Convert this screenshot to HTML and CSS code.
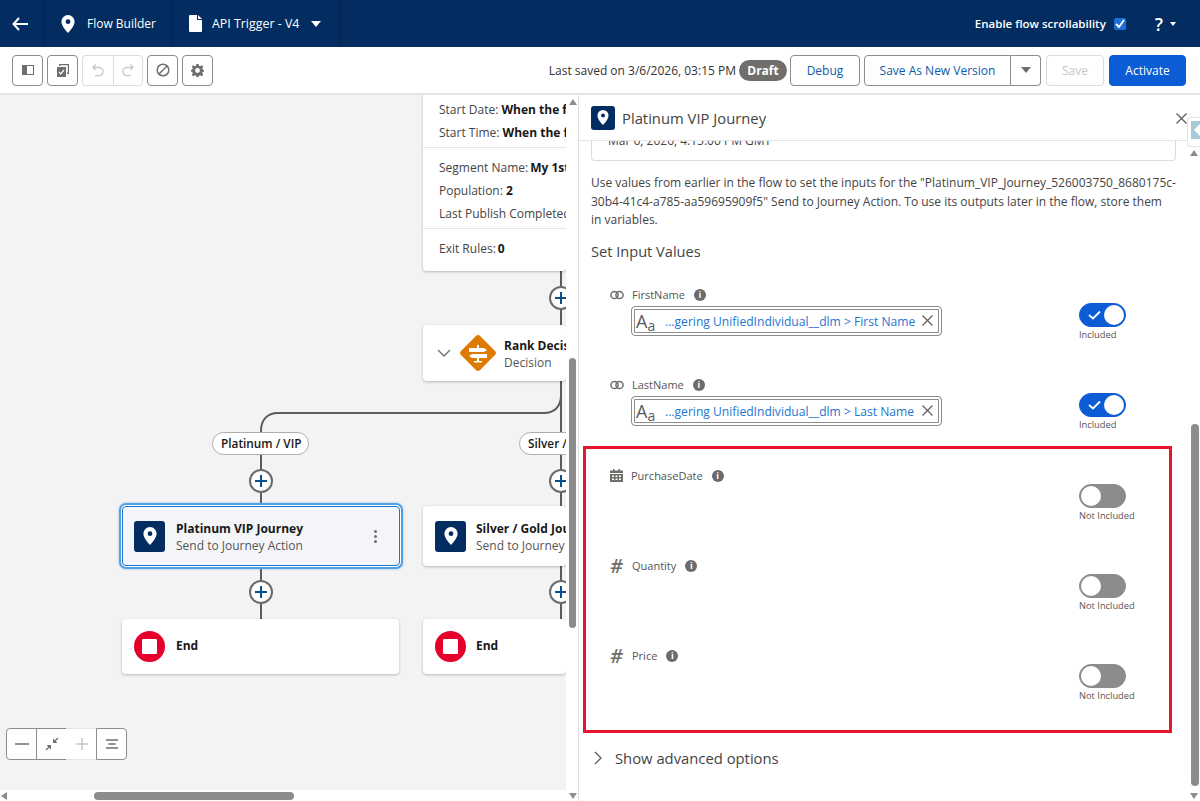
FILE: index.html
```html
<!DOCTYPE html>
<html lang="en">
<head>
    <meta charset="UTF-8">
    <title>Flow Builder - API Trigger - V4</title>
    <link rel="stylesheet" href="styles.css">
</head>
<body>
    <!-- Top bar -->
    <header class="topbar">
        <div class="top-cell back-cell">
            <svg width="16" height="14" viewBox="0 0 16 14"><path d="M7 1 1.500 7 7 13M1.500 7H16" fill="none" stroke="#fff" stroke-width="2"/></svg>
        </div>
        <div class="top-cell app-cell">
            <svg width="14" height="18" viewBox="0 0 14 18"><path fill-rule="evenodd" d="M7 0a6.600 6.600 0 0 1 6.600 6.600C13.600 11 9 16 7 18 5 16 .4 11 .4 6.600A6.600 6.600 0 0 1 7 0zm0 4.300a2.400 2.400 0 1 0 0 4.800 2.400 2.400 0 0 0 0-4.800z" fill="#fff"/></svg>
            <span>Flow Builder</span>
        </div>
        <div class="top-cell file-cell">
            <svg width="13" height="17" viewBox="0 0 13 17"><path d="M1 0h7v5h5v11a1 1 0 0 1-1 1H1a1 1 0 0 1-1-1V1a1 1 0 0 1 1-1zM9 0l4 4H9z" fill="#fff"/></svg>
            <span>API Trigger - V4</span>
            <i class="caret"></i>
        </div>
        <div class="top-right">
            <span class="scroll-label">Enable flow scrollability</span>
            <span class="top-check">
                <svg width="10" height="9" viewBox="0 0 10 9"><path d="M1 5l3 3 5-7" fill="none" stroke="#fff" stroke-width="1.800"/></svg>
            </span>
            <span class="help">?</span>
            <i class="caret small"></i>
        </div>
    </header>

    <!-- Toolbar -->
    <div class="toolbar">
        <div class="tool-left">
            <button class="icon-btn">
                <svg width="12" height="10" viewBox="0 0 12 10"><path fill-rule="evenodd" d="M0 0h12v10H0zM5 1v8h6V1z" fill="#706e6b"/></svg>
            </button>
            <button class="icon-btn">
                <svg width="13" height="13" viewBox="0 0 13 13"><path d="M3 2V0h10v10h-2V8.500h.8V1.200H4.200V2zM1 3h9v10H1z" fill="#706e6b"/><path d="M3 8l1.800 1.800L8 6" fill="none" stroke="#fff" stroke-width="1.200"/></svg>
            </button>
            <div class="btn-pair">
                <button class="icon-btn off">
                    <svg width="14" height="14" viewBox="0 0 14 14"><path d="M4.500 1.500 2 4.500l2.500 2.500M2 4.500h6a4 4 0 0 1 0 8.200H4" fill="none" stroke="#c9c7c5" stroke-width="1.300"/></svg>
                </button>
                <button class="icon-btn off">
                    <svg width="14" height="14" viewBox="0 0 14 14"><path d="M9.500 1.500 12 4.500 9.500 7M12 4.500H6a4 4 0 0 0 0 8.200h4" fill="none" stroke="#c9c7c5" stroke-width="1.300"/></svg>
                </button>
            </div>
            <button class="icon-btn">
                <svg width="14" height="14" viewBox="0 0 14 14"><circle cx="7" cy="7" r="5.800" fill="none" stroke="#706e6b" stroke-width="1.500"/><path d="M3 11l8-8" stroke="#706e6b" stroke-width="1.500"/></svg>
            </button>
            <button class="icon-btn">
                <svg width="13" height="13" viewBox="0 0 24 24"><path fill-rule="evenodd" d="M10 0h4l.7 3.400 2.200.9L20 2.400 22.600 5l-1.900 3 .9 2.200L24 11v3l-2.400.7-.9 2.200 1.900 3L20 22.500l-3-1.900-2.300.9L14 24h-4l-.7-2.500-2.300-.9-3 1.900L1.400 20l1.900-3-.9-2.300L0 14v-3l2.400-.8.900-2.200-1.900-3L4 2.400l3.100 1.900 2.200-.9zM12 7.500a4.500 4.500 0 1 0 0 9 4.500 4.500 0 0 0 0-9z" fill="#706e6b"/></svg>
            </button>
        </div>
        <div class="tool-right">
            <span class="saved">Last saved on 3/6/2026, 03:15 PM</span>
            <span class="draft">Draft</span>
            <button class="btn debug-btn">Debug</button>
            <div class="split">
                <button class="btn split-main">Save As New Version</button>
                <button class="btn split-arrow"><i class="caret grey"></i></button>
            </div>
            <button class="btn save-btn">Save</button>
            <button class="btn activate-btn">Activate</button>
        </div>
    </div>

    <main class="workspace">
        <!-- Flow canvas -->
        <section class="canvas">
            <svg class="wires" width="566" height="706" viewBox="0 0 566 706">
                <path d="M561 176v354M261 530V336c0-11 6-18 17-18h266c10 0 17-6 17-18" fill="none" stroke="#5c5c5c" stroke-width="2"/>
            </svg>

            <div class="node start-node">
                <div class="start-group">
                    <p>Start Date: <b>When the flow starts</b></p>
                    <p>Start Time: <b>When the flow starts</b></p>
                </div>
                <div class="start-group">
                    <p>Segment Name:<b class="tight">My 1st Segment</b></p>
                    <p>Population: <b>2</b></p>
                    <p>Last Publish Completed</p>
                </div>
                <div class="start-group last">
                    <p>Exit Rules:<b class="tight">0</b></p>
                </div>
            </div>

            <div class="add-btn add-a"></div>

            <div class="node flow-node decision-node">
                <svg class="chev" width="14" height="9" viewBox="0 0 14 9"><path d="M1 1l6 6 6-6" fill="none" stroke="#706e6b" stroke-width="1.300"/></svg>
                <svg class="diamond" width="38" height="38" viewBox="0 0 38 38"><rect x="5.500" y="5.500" width="27" height="27" rx="3" transform="rotate(45 19 19)" fill="#dd7a01"/><path d="M10 14h15l3 2-3 2H10zM28 20H13l-3 2 3 2h15zM18 11h2v3h-2zM18 24h2v3h-2zM15 27h8v1.500h-8z" fill="#fff"/></svg>
                <div class="node-text">
                    <strong>Rank Decision</strong>
                    <span>Decision</span>
                </div>
            </div>

            <div class="pill pill-a">Platinum / VIP</div>
            <div class="pill pill-b">Silver / Gold</div>

            <div class="add-btn add-b"></div>
            <div class="add-btn add-c"></div>

            <div class="node flow-node journey-node selected">
                <div class="journey-icon">
                    <svg width="14" height="18" viewBox="0 0 14 18"><path fill-rule="evenodd" d="M7 0a6.600 6.600 0 0 1 6.600 6.600C13.600 11 9 16 7 18 5 16 .4 11 .4 6.600A6.600 6.600 0 0 1 7 0zm0 4.300a2.400 2.400 0 1 0 0 4.800 2.400 2.400 0 0 0 0-4.800z" fill="#fff"/></svg>
                </div>
                <div class="node-text">
                    <strong>Platinum VIP Journey</strong>
                    <span>Send to Journey Action</span>
                </div>
                <div class="dots"><i></i><i></i><i></i></div>
            </div>

            <div class="node flow-node journey-node second">
                <div class="journey-icon">
                    <svg width="14" height="18" viewBox="0 0 14 18"><path fill-rule="evenodd" d="M7 0a6.600 6.600 0 0 1 6.600 6.600C13.600 11 9 16 7 18 5 16 .4 11 .4 6.600A6.600 6.600 0 0 1 7 0zm0 4.300a2.400 2.400 0 1 0 0 4.800 2.400 2.400 0 0 0 0-4.800z" fill="#fff"/></svg>
                </div>
                <div class="node-text">
                    <strong>Silver / Gold Journey</strong>
                    <span>Send to Journey Action</span>
                </div>
            </div>

            <div class="add-btn add-d"></div>
            <div class="add-btn add-e"></div>

            <div class="node flow-node end-node end-a">
                <div class="end-icon"><i></i></div>
                <strong>End</strong>
            </div>
            <div class="node flow-node end-node end-b">
                <div class="end-icon"><i></i></div>
                <strong>End</strong>
            </div>

            <div class="zoom-tools">
                <button class="zoom-btn"><svg width="14" height="2" viewBox="0 0 14 2"><path d="M0 1h14" stroke="#706e6b" stroke-width="1.500"/></svg></button>
                <button class="zoom-btn"><svg width="14" height="14" viewBox="0 0 14 14"><path d="M13 1 9 5M1 13l4-4" stroke="#706e6b" stroke-width="1.300"/><path d="M8 1.500V6h4.500zM6 12.500V8H1.500z" fill="#706e6b"/></svg></button>
                <button class="zoom-btn off"><svg width="12" height="12" viewBox="0 0 12 12"><path d="M6 0v12M0 6h12" stroke="#c9c7c5" stroke-width="1.500"/></svg></button>
                <button class="zoom-btn"><svg width="12" height="10" viewBox="0 0 12 10"><path d="M0 1h12M2.500 5h7M0 9h12" stroke="#706e6b" stroke-width="1.500"/></svg></button>
            </div>

            <div class="v-scroll"><i class="arrow-up"></i><div class="v-thumb"></div><i class="arrow-down"></i></div>
            <div class="h-scroll"><i class="arrow-left"></i><div class="h-thumb"></div></div>
        </section>

        <!-- Properties panel -->
        <aside class="panel">
            <div class="panel-head">
                <div class="journey-icon small">
                    <svg width="12" height="15" viewBox="0 0 14 18"><path fill-rule="evenodd" d="M7 0a6.600 6.600 0 0 1 6.600 6.600C13.600 11 9 16 7 18 5 16 .4 11 .4 6.600A6.600 6.600 0 0 1 7 0zm0 4.300a2.400 2.400 0 1 0 0 4.800 2.400 2.400 0 0 0 0-4.800z" fill="#fff"/></svg>
                </div>
                <h2>Platinum VIP Journey</h2>
                <svg class="panel-close" width="11" height="11" viewBox="0 0 11 11"><path d="M.5.5l10 10M10.500.5l-10 10" stroke="#5c5c5c" stroke-width="1.300"/></svg>
            </div>
            <div class="panel-body">
                <div class="journey-box"><span>Mar 6, 2026, 4:15:00 PM GMT</span></div>
                <p class="intro">Use values from earlier in the flow to set the inputs for the "Platinum_VIP_Journey_526003750_8680175c-30b4-41c4-a785-aa59695909f5" Send to Journey Action. To use its outputs later in the flow, store them<br>in variables.</p>
                <h3>Set Input Values</h3>

                <div class="input-row">
                    <div class="input-main">
                        <div class="input-label">
                            <svg class="type-icon" width="14" height="10" viewBox="0 0 14 10"><circle cx="4.500" cy="5" r="3.600" fill="none" stroke="#706e6b" stroke-width="1.500"/><circle cx="9.500" cy="5" r="3.600" fill="none" stroke="#706e6b" stroke-width="1.500"/></svg>
                            <span>FirstName</span>
                            <i class="info">i</i>
                        </div>
                        <div class="pill-input">
                            <span class="aa">A<small>a</small></span>
                            <span class="pill-value">...gering UnifiedIndividual__dlm &gt; First Name</span>
                            <svg width="11" height="11" viewBox="0 0 11 11"><path d="M.5.5l10 10M10.500.5l-10 10" stroke="#5c5c5c" stroke-width="1.200"/></svg>
                        </div>
                    </div>
                    <div class="toggle-wrap">
                        <div class="toggle on"><svg width="13" height="10" viewBox="0 0 13 10"><path d="M1 5l4 3.500L12 1.500" fill="none" stroke="#fff" stroke-width="1.800"/></svg><i></i></div>
                        <span>Included</span>
                    </div>
                </div>

                <div class="input-row before-box">
                    <div class="input-main">
                        <div class="input-label">
                            <svg class="type-icon" width="14" height="10" viewBox="0 0 14 10"><circle cx="4.500" cy="5" r="3.600" fill="none" stroke="#706e6b" stroke-width="1.500"/><circle cx="9.500" cy="5" r="3.600" fill="none" stroke="#706e6b" stroke-width="1.500"/></svg>
                            <span>LastName</span>
                            <i class="info">i</i>
                        </div>
                        <div class="pill-input">
                            <span class="aa">A<small>a</small></span>
                            <span class="pill-value">...gering UnifiedIndividual__dlm &gt; Last Name</span>
                            <svg width="11" height="11" viewBox="0 0 11 11"><path d="M.5.5l10 10M10.500.5l-10 10" stroke="#5c5c5c" stroke-width="1.200"/></svg>
                        </div>
                    </div>
                    <div class="toggle-wrap">
                        <div class="toggle on"><svg width="13" height="10" viewBox="0 0 13 10"><path d="M1 5l4 3.500L12 1.500" fill="none" stroke="#fff" stroke-width="1.800"/></svg><i></i></div>
                        <span>Included</span>
                    </div>
                </div>

                <div class="highlight">
                    <div class="input-row">
                        <div class="input-main">
                            <div class="input-label">
                                <svg class="type-icon" width="13" height="13" viewBox="0 0 13 13"><path fill-rule="evenodd" d="M3 0h1.500v1.500h4V0H10v1.500h2.500a.5.5 0 0 1 .5.500v2H0V2a.5.5 0 0 1 .5-.5H3zM0 5h13v7.500a.5.5 0 0 1-.5.500H.5a.5.500 0 0 1-.5-.5zm2 1.500V8h2V6.500zm3.500 0V8h2V6.500zm3.500 0V8h2V6.500zM2 9.500V11h2V9.500zm3.500 0V11h2V9.500zm3.500 0V11h2V9.500z" fill="#706e6b"/></svg>
                                <span>PurchaseDate</span>
                                <i class="info">i</i>
                            </div>
                        </div>
                        <div class="toggle-wrap">
                            <div class="toggle"><i></i></div>
                            <span>Not Included</span>
                        </div>
                    </div>
                    <div class="input-row">
                        <div class="input-main">
                            <div class="input-label">
                                <span class="hash">#</span>
                                <span>Quantity</span>
                                <i class="info">i</i>
                            </div>
                        </div>
                        <div class="toggle-wrap">
                            <div class="toggle"><i></i></div>
                            <span>Not Included</span>
                        </div>
                    </div>
                    <div class="input-row">
                        <div class="input-main">
                            <div class="input-label">
                                <span class="hash">#</span>
                                <span>Price</span>
                                <i class="info">i</i>
                            </div>
                        </div>
                        <div class="toggle-wrap">
                            <div class="toggle"><i></i></div>
                            <span>Not Included</span>
                        </div>
                    </div>
                </div>

                <div class="advanced">
                    <svg width="9" height="14" viewBox="0 0 9 14"><path d="M1 1l6 6-6 6" fill="none" stroke="#5c5c5c" stroke-width="1.300"/></svg>
                    <span>Show advanced options</span>
                </div>
            </div>
            <div class="panel-scroll">
                <div class="side-tab"><i></i></div>
                <i class="arrow-up"></i>
                <div class="panel-thumb"></div>
                <i class="arrow-down"></i>
            </div>
        </aside>
    </main>
</body>
</html>
```

FILE: styles.css
```css
* {
    box-sizing: border-box;
}
html, body {
    margin: 0;
    height: 801px;
    overflow: hidden;
}
body {
    font-family: "Open Sans", "Noto Sans", Arial, sans-serif;
    font-size: 12px;
    color: #444;
    background: #fff;
}
p, h2, h3 {
    margin: 0;
    font-weight: 400;
}
button {
    font-family: inherit;
    cursor: pointer;
    padding: 0;
    background: #fff;
}

/* top bar */
.topbar {
    height: 47px;
    background: #032d60;
    color: #fff;
    display: flex;
    align-items: center;
}
.top-cell {
    height: 47px;
    display: flex;
    align-items: center;
    border-right: 1px solid #02234b;
}
.back-cell {
    width: 44px;
    padding-left: 12px;
}
.app-cell {
    width: 128px;
    padding-left: 17px;
    gap: 12px;
    font-size: 12px;
}
.file-cell {
    width: 169px;
    padding-left: 17px;
    gap: 10px;
    font-size: 12.400px;
}
.caret {
    display: inline-block;
    width: 0;
    height: 0;
    border-left: 5.500px solid transparent;
    border-right: 5.500px solid transparent;
    border-top: 6px solid #fff;
}
.file-cell .caret {
    margin-left: 2px;
}
.caret.small {
    border-left-width: 3px;
    border-right-width: 3px;
    border-top-width: 4px;
    margin-left: 7px;
}
.caret.grey {
    border-top-color: #706e6b;
    border-left-width: 5px;
    border-right-width: 5px;
}
.top-right {
    margin-left: auto;
    padding-right: 24px;
    display: flex;
    align-items: center;
}
.scroll-label {
    font-size: 11.500px;
    font-weight: 600;
}
.top-check {
    width: 12px;
    height: 12px;
    margin-left: 8px;
    background: #1b6fd6;
    border-radius: 2px;
    display: flex;
    align-items: center;
    justify-content: center;
}
.help {
    margin-left: 29px;
    font-size: 18px;
    font-weight: 600;
    line-height: 1;
}

/* toolbar */
.toolbar {
    height: 48px;
    padding: 8px 14px 8px 12px;
    display: flex;
    justify-content: space-between;
    align-items: center;
    border-bottom: 2px solid #e5e5e5;
}
.tool-left, .tool-right {
    display: flex;
    align-items: center;
}
.tool-left {
    gap: 4px;
}
.icon-btn {
    width: 31px;
    height: 31px;
    border: 1px solid #8c8c8c;
    border-radius: 4px;
    display: flex;
    align-items: center;
    justify-content: center;
}
.btn-pair {
    display: flex;
}
.icon-btn.off {
    width: 30.500px;
    border-color: #dcdcdc;
}
.btn-pair .off:first-child {
    border-radius: 4px 0 0 4px;
    border-right: 0;
}
.btn-pair .off:last-child {
    border-radius: 0 4px 4px 0;
}
.saved {
    font-size: 12px;
    color: #333;
}
.draft {
    margin-left: 3px;
    width: 48px;
    height: 21px;
    border-radius: 11px;
    background: #706e6b;
    color: #fff;
    font-size: 12px;
    font-weight: 700;
    line-height: 21px;
    text-align: center;
}
.btn {
    height: 31px;
    border: 1px solid #8c8c8c;
    border-radius: 4px;
    font-size: 12px;
    color: #0b5cab;
}
.debug-btn {
    width: 70px;
    margin-left: 3px;
}
.split {
    display: flex;
    margin-left: 4px;
}
.split-main {
    width: 147px;
    border-radius: 4px 0 0 4px;
}
.split-arrow {
    width: 30px;
    border-left: 0;
    border-radius: 0 4px 4px 0;
    display: flex;
    align-items: center;
    justify-content: center;
}
.save-btn {
    width: 58px;
    margin-left: 5px;
    color: #c9c7c5;
    border-color: #dcdcdc;
}
.activate-btn {
    width: 77px;
    margin-left: 5px;
    background: #0b5cd5;
    border-color: #0b5cd5;
    color: #fff;
}

/* layout */
.workspace {
    display: flex;
    height: 706px;
}
.canvas {
    position: relative;
    flex: none;
    width: 579px;
    height: 706px;
    background: #f3f3f3;
    overflow: hidden;
    border-right: 1px solid #dcdcdc;
}
.wires {
    position: absolute;
    left: 0;
    top: 0;
}

/* flow nodes sit on a free canvas */
.node {
    position: absolute;
    background: #fff;
    border-radius: 4px;
    box-shadow: 0 1px 3px rgba(0, 0, 0, 0.25);
}
.start-node {
    left: 423px;
    top: -10px;
    width: 143px;
    height: 186px;
    overflow: hidden;
    white-space: nowrap;
    color: #444;
    font-size: 12px;
}
.start-node b {
    color: #181818;
    font-weight: 700;
}
.start-node .tight {
    margin-left: 2px;
}
.start-group {
    border-bottom: 1px solid #e5e5e5;
    padding: 0 16px;
}
.start-group p {
    height: 23px;
    line-height: 23px;
}
.start-group:first-child {
    padding-top: 13px;
    height: 63px;
}
.start-group:nth-child(2) {
    height: 81px;
    padding-top: 8px;
}
.start-group.last {
    border-bottom: 0;
    padding-top: 8px;
}
.flow-node {
    display: flex;
    align-items: center;
}
.node-text {
    display: flex;
    flex-direction: column;
    white-space: nowrap;
    gap: 1px;
    padding-top: 2px;
    font-size: 12px;
    line-height: 16px;
    color: #555;
}
.node-text strong, .end-node strong {
    color: #181818;
    font-weight: 700;
    font-size: 12px;
}
.decision-node {
    left: 423px;
    top: 230px;
    width: 143px;
    height: 56px;
    overflow: hidden;
    padding-left: 14px;
}
.chev {
    flex: none;
    margin-right: 8px;
}
.diamond {
    flex: none;
    margin-right: 7px;
}
.journey-node {
    top: 411px;
    height: 60px;
    padding-left: 12px;
    gap: 10px;
}
.journey-node.selected {
    left: 122px;
    width: 278px;
    background: #f3f5f9;
    border: 1px solid #1b76d2;
    box-shadow: 0 0 0 1px #fff, 0 0 0 3px #4f9fe3, 0 0 3px 3px rgba(79, 159, 227, 0.5);
    padding-left: 11px;
    gap: 11px;
}
.journey-node.second {
    left: 423px;
    width: 143px;
    overflow: hidden;
}
.journey-icon {
    flex: none;
    width: 31px;
    height: 31px;
    background: #032d60;
    border-radius: 3px;
    display: flex;
    align-items: center;
    justify-content: center;
}
.journey-icon.small {
    width: 24px;
    height: 24px;
}
.dots {
    margin-left: auto;
    margin-right: 22px;
    display: flex;
    flex-direction: column;
    gap: 2px;
}
.dots i {
    width: 3px;
    height: 3px;
    border-radius: 50%;
    background: #706e6b;
}
.end-node {
    top: 524px;
    height: 55px;
    padding-left: 12px;
    gap: 11px;
}
.end-node strong {
    padding-bottom: 2px;
}
.end-a {
    left: 122px;
    width: 277px;
}
.end-b {
    left: 423px;
    width: 143px;
    overflow: hidden;
    gap: 10px;
}
.end-icon {
    flex: none;
    width: 31px;
    height: 31px;
    border-radius: 50%;
    background: #e4002b;
    display: flex;
    align-items: center;
    justify-content: center;
}
.end-icon i {
    width: 15px;
    height: 15px;
    background: #fff;
    border-radius: 1px;
}
.pill {
    position: absolute;
    top: 337px;
    height: 23px;
    border: 1px solid #aeaeae;
    border-radius: 12px;
    background: #fff;
    font-size: 11.800px;
    font-weight: 600;
    color: #181818;
    line-height: 21px;
    padding: 0 8px;
    white-space: nowrap;
}
.pill-a {
    left: 212px;
    width: 97px;
}
.pill-b {
    left: 519px;
    width: 100px;
}
.add-btn {
    position: absolute;
    width: 24px;
    height: 24px;
    border-radius: 50%;
    background: #fff;
    border: 2px solid #6b6b6b;
}
.add-btn::before, .add-btn::after {
    content: "";
    position: absolute;
    background: #0b4f8a;
}
.add-btn::before {
    left: 4px;
    right: 4px;
    top: 9px;
    height: 2px;
}
.add-btn::after {
    top: 4px;
    bottom: 4px;
    left: 9px;
    width: 2px;
}
.add-a { left: 549px; top: 191px; }
.add-b { left: 249px; top: 374px; }
.add-c { left: 549px; top: 374px; }
.add-d { left: 249px; top: 485px; }
.add-e { left: 549px; top: 485px; }
.zoom-tools {
    position: absolute;
    left: 6px;
    top: 633px;
    display: flex;
}
.zoom-btn {
    width: 31px;
    height: 32px;
    border: 1px solid #8c8c8c;
    margin-left: -1px;
    display: flex;
    align-items: center;
    justify-content: center;
}
.zoom-btn:first-child {
    margin-left: 0;
    border-radius: 4px 0 0 4px;
}
.zoom-btn:last-child {
    border-radius: 0 4px 4px 0;
}
.zoom-btn.off {
    border-top-color: #e5e5e5;
    border-bottom-color: #e5e5e5;
    border-left: 0;
    border-right: 0;
}

/* scrollbars */
.arrow-up, .arrow-down {
    position: absolute;
    border-left: 4px solid transparent;
    border-right: 4px solid transparent;
}
.arrow-up {
    border-bottom: 6px solid #8c8c8c;
}
.arrow-down {
    border-top: 6px solid #8c8c8c;
}
.v-scroll {
    position: absolute;
    right: 0;
    top: 0;
    width: 12px;
    height: 706px;
    background: #fff;
}
.v-scroll .arrow-up {
    left: 3px;
    top: 4px;
}
.v-scroll .arrow-down {
    left: 3px;
    top: 698px;
}
.v-thumb {
    position: absolute;
    left: 3px;
    top: 263px;
    width: 7px;
    height: 270px;
    border-radius: 4px;
    background: #8c8c8c;
}
.h-scroll {
    position: absolute;
    left: 0;
    right: 12px;
    bottom: 0;
    height: 11px;
    background: #fff;
}
.arrow-left {
    position: absolute;
    left: 1px;
    top: 2px;
    border-top: 4px solid transparent;
    border-bottom: 4px solid transparent;
    border-right: 6px solid #8c8c8c;
}
.h-thumb {
    position: absolute;
    left: 94px;
    top: 2px;
    width: 200px;
    height: 8px;
    border-radius: 4px;
    background: #8c8c8c;
}

/* panel */
.panel {
    position: relative;
    flex: 1;
    height: 706px;
    overflow: hidden;
}
.panel-head {
    position: relative;
    height: 46px;
    display: flex;
    align-items: center;
    padding-left: 12px;
    gap: 7px;
    background: #fff;
    border-bottom: 1px solid #e5e5e5;
}
.panel-head h2 {
    font-size: 14.800px;
    color: #444;
}
.panel-close {
    position: absolute;
    right: 13px;
    top: 18px;
}
.panel-body {
    padding: 0 24px 0 12px;
}
.journey-box {
    height: 20px;
    margin-bottom: 13px;
    padding-left: 16px;
    border: 1px solid #dcdcdc;
    border-top: 0;
    border-radius: 0 0 4px 4px;
    font-size: 12px;
    line-height: 0;
    color: #444;
    overflow: hidden;
}
.intro {
    font-size: 12px;
    line-height: 18.500px;
    color: #444;
    width: 590px;
}
.panel-body h3 {
    margin-top: 10px;
    font-size: 14.600px;
    line-height: 22px;
    color: #444;
}
.input-row {
    height: 90px;
    padding-left: 19px;
    display: flex;
}
.panel-body h3 + .input-row {
    margin-top: 24px;
}
.input-row.before-box {
    height: 68px;
}
.input-main {
    width: 469px;
}
.input-label {
    display: flex;
    align-items: center;
    height: 18px;
    font-size: 11px;
    color: #555;
}
.type-icon {
    flex: none;
    margin-right: 8px;
}
.hash {
    width: 14px;
    margin-right: 8px;
    font-size: 20px;
    font-weight: 600;
    font-style: italic;
    color: #706e6b;
    line-height: 18px;
}
.info {
    width: 12px;
    height: 12px;
    margin-left: 9px;
    border-radius: 50%;
    background: #6b6b6b;
    color: #fff;
    font-size: 9px;
    font-weight: 700;
    font-style: normal;
    line-height: 12px;
    text-align: center;
}
.pill-input {
    margin: 2px 0 0 21px;
    width: 311px;
    height: 30px;
    border: 1px solid #8c8c8c;
    border-radius: 4px;
    padding: 0 8px 0 4px;
    display: flex;
    align-items: center;
    box-shadow: inset 0 0 0 2px #fff, inset 0 0 0 3px #8c8c8c;
}
.aa {
    font-size: 18px;
    color: #5c5c5c;
    width: 29px;
    line-height: 1;
}
.aa small {
    font-size: 14px;
    position: relative;
    top: 3px;
}
.pill-value {
    flex: 1;
    padding-top: 2px;
    color: #1b76d2;
    font-size: 12.100px;
    white-space: nowrap;
}
.toggle-wrap {
    margin-top: 17px;
    font-size: 9.300px;
    line-height: 12px;
    color: #555;
    white-space: nowrap;
}
.toggle-wrap span {
    display: block;
    margin-top: 2px;
}
.toggle {
    position: relative;
    width: 47px;
    height: 24px;
    border-radius: 12px;
    background: #8c8c8c;
    border: 1px solid #8c8c8c;
}
.toggle.on {
    background: #0b5cd5;
    border-color: #0b5cd5;
}
.toggle i {
    position: absolute;
    left: 1px;
    top: 1px;
    width: 20px;
    height: 20px;
    border-radius: 50%;
    background: #fff;
}
.toggle.on i {
    left: auto;
    right: 1px;
}
.toggle svg {
    position: absolute;
    left: 8px;
    top: 6px;
}
.highlight {
    margin: 2px 0 0 -8px;
    width: 589px;
    height: 287px;
    padding: 18px 0 0 5px;
    border: 3px solid #e6142d;
}
.advanced {
    margin-top: 15px;
    display: flex;
    align-items: center;
    gap: 12px;
    padding-left: 3px;
    font-size: 14.800px;
    color: #444;
}
.panel-scroll {
    position: absolute;
    right: 0;
    top: 0;
    bottom: 0;
    width: 15px;
}
.panel-scroll .arrow-up {
    left: 5px;
    top: 55px;
}
.panel-scroll .arrow-down {
    left: 5px;
    top: 698px;
}
.panel-thumb {
    position: absolute;
    left: 6px;
    top: 329px;
    width: 8px;
    height: 362px;
    border-radius: 4px;
    background: #8c8c8c;
}
.side-tab {
    position: absolute;
    left: 2px;
    top: 22px;
    width: 13px;
    height: 30px;
    background: #fff;
    border: 1px solid #e5e5e5;
    border-right: 0;
    border-radius: 4px 0 0 4px;
}
.side-tab i {
    position: absolute;
    left: 3px;
    top: 3px;
    width: 9px;
    height: 18px;
    background: #a9c8d8;
}
.side-tab i::after {
    content: "";
    position: absolute;
    right: 0;
    top: 3px;
    border-top: 6px solid transparent;
    border-bottom: 6px solid transparent;
    border-right: 6px solid #fff;
}
```
